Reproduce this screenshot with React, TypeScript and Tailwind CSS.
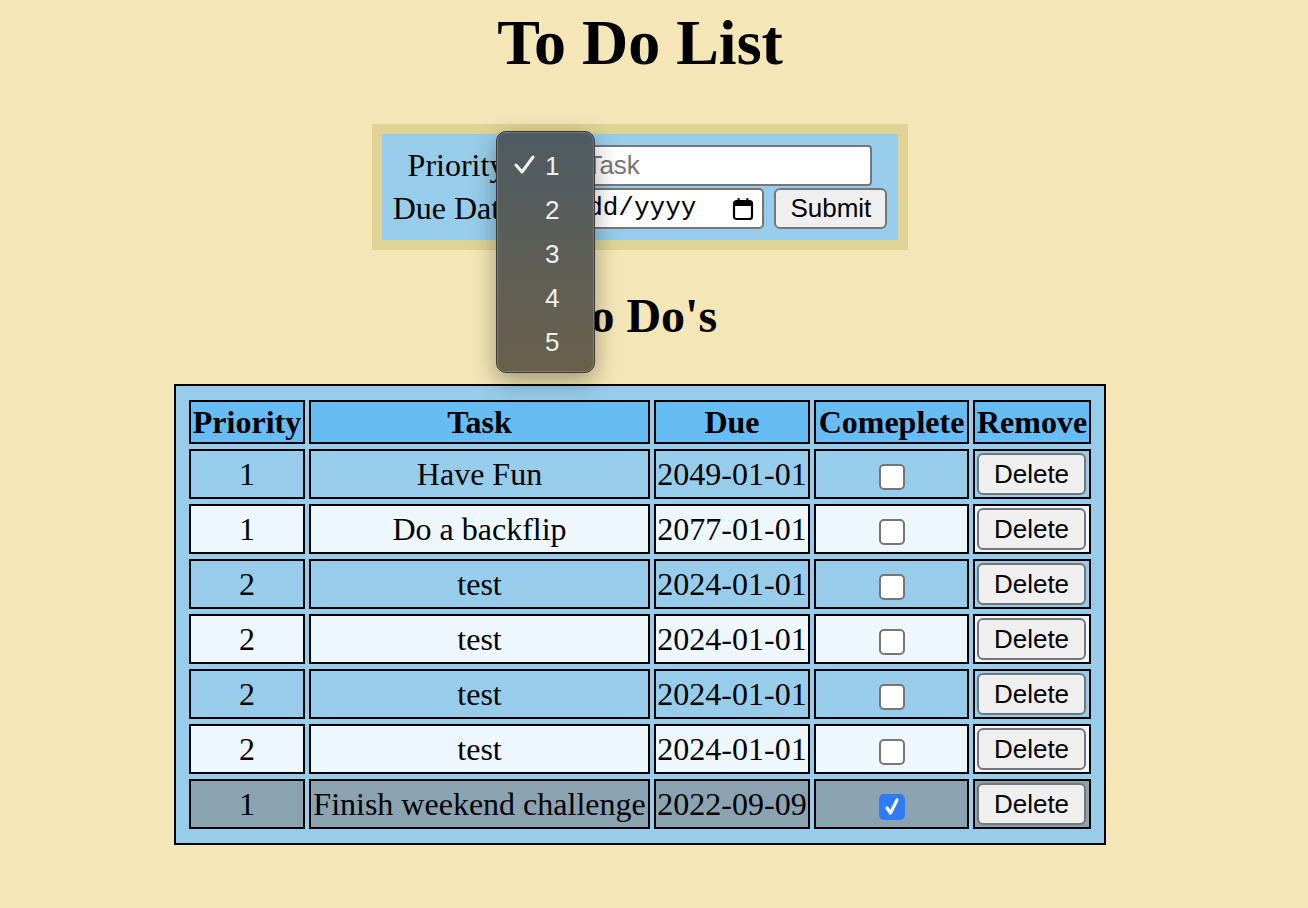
import React from "react";

const rows = [
  { p: "1", t: "Have Fun", d: "2049-01-01", done: false, bg: "bg-[#97cdea]" },
  { p: "1", t: "Do a backflip", d: "2077-01-01", done: false, bg: "bg-[#eff7fe]" },
  { p: "2", t: "test", d: "2024-01-01", done: false, bg: "bg-[#97cdea]" },
  { p: "2", t: "test", d: "2024-01-01", done: false, bg: "bg-[#eff7fe]" },
  { p: "2", t: "test", d: "2024-01-01", done: false, bg: "bg-[#97cdea]" },
  { p: "2", t: "test", d: "2024-01-01", done: false, bg: "bg-[#eff7fe]" },
  { p: "1", t: "Finish weekend challenge", d: "2022-09-09", done: true, bg: "bg-[#8ba3b0]" },
];

function Checkbox({ checked }: { checked: boolean }) {
  if (checked) {
    return (
      <span className="inline-flex h-[26px] w-[26px] items-center justify-center rounded-[5px] bg-[#2f7bf6] align-middle">
        <svg width="18" height="20" viewBox="0 0 18 20">
          <path d="M4 11 L7.5 16 L14 3" fill="none" stroke="white" strokeWidth="3.2" strokeLinecap="round" strokeLinejoin="round" />
        </svg>
      </span>
    );
  }
  return <span className="inline-block h-[26px] w-[26px] rounded-[5px] border-2 border-[#767676] bg-white align-middle" />;
}

export default function App() {
  return (
    <div className="relative min-h-[908px] bg-[#f4e6b6] font-['Liberation_Serif','Times_New_Roman',serif] text-black">
      <div className="flex w-[1280px] flex-col items-center">
        <h1 className="mt-[7px] text-[64px] font-bold leading-[71px]">To Do List</h1>

        <div className="mt-[46px] w-[536px] border-[10px] border-[#dfd495] bg-[#97cdea] pt-[11px] pb-[11px] text-[32px]">
          <div className="flex h-[41px] items-center justify-center gap-[8px]">
            <span className="leading-[37px]">Priority</span>
            <span className="inline-block h-[36px] w-[54px] rounded-[5px] border border-[#767676] bg-[#efefef]" />
            <div className="flex h-[41px] w-[297px] items-center rounded-[4px] border-2 border-[#767676] bg-white pl-[9px] font-['Liberation_Sans',Arial,sans-serif] text-[26px] text-[#757575]">
              Task
            </div>
          </div>
          <div className="mt-[2px] flex h-[41px] items-center justify-center gap-[8px]">
            <span className="leading-[37px]">Due Date</span>
            <div className="flex h-[41px] w-[242px] items-center justify-end overflow-hidden rounded-[5px] border-2 border-[#767676] bg-white pr-[8px] font-['Liberation_Mono','Courier_New',monospace] text-[26px]">
              <span className="whitespace-nowrap">mm/dd/yyyy</span>
              <svg className="ml-[36px] shrink-0" width="22" height="24" viewBox="0 0 22 24">
                <rect x="2" y="4" width="18" height="18" rx="2.5" fill="none" stroke="black" strokeWidth="2.2" />
                <rect x="2" y="4" width="18" height="5" fill="black" />
                <rect x="5.5" y="1" width="2.2" height="5" rx="1" fill="black" />
                <rect x="14.3" y="1" width="2.2" height="5" rx="1" fill="black" />
              </svg>
            </div>
            <button className="ml-[2px] flex h-[41px] w-[113px] items-center justify-center rounded-[6px] border-2 border-[#767676] bg-[#efefef] font-['Liberation_Sans',Arial,sans-serif] text-[26px]">
              Submit
            </button>
          </div>
        </div>

        <h2 className="mt-[39px] text-[48px] font-bold leading-[53px]">To Do's</h2>

        <table className="mt-[42px] border-separate border-spacing-x-[4px] border-spacing-y-[5px] border-2 border-black bg-[#97cdea] px-[9px] py-[9px] text-[32px]">
          <thead>
            <tr>
              {[
                ["Priority", "w-[116px]"],
                ["Task", "w-[341px]"],
                ["Due", "w-[156px]"],
                ["Comeplete", "w-[155px]"],
                ["Remove", "w-[118px]"],
              ].map(([h, w]) => (
                <th key={h} className={`${w} h-[44px] whitespace-nowrap border-2 border-black bg-[#67bcf4] p-0 text-center font-bold leading-[37px]`}>
                  {h}
                </th>
              ))}
            </tr>
          </thead>
          <tbody>
            {rows.map((r, i) => (
              <tr key={i}>
                <td className={`h-[50px] border-2 border-black ${r.bg} p-0 text-center leading-[37px]`}>{r.p}</td>
                <td className={`h-[50px] whitespace-nowrap border-2 border-black ${r.bg} p-0 text-center leading-[37px]`}>{r.t}</td>
                <td className={`h-[50px] whitespace-nowrap border-2 border-black ${r.bg} p-0 text-center leading-[37px]`}>{r.d}</td>
                <td className={`h-[50px] border-2 border-black ${r.bg} p-0 text-center leading-[37px]`}>
                  <Checkbox checked={r.done} />
                </td>
                <td className={`h-[50px] border-2 border-black ${r.bg} p-0 pl-[2px] text-left`}>
                  <button className="flex h-[42px] w-[109px] items-center justify-center rounded-[6px] border-2 border-[#767676] bg-[#efefef] font-['Liberation_Sans',Arial,sans-serif] text-[26px] leading-none">
                    Delete
                  </button>
                </td>
              </tr>
            ))}
          </tbody>
        </table>
      </div>

      <div className="absolute left-[496px] top-[131px] h-[242px] w-[99px] rounded-[10px] border border-[#3a3a3a] bg-gradient-to-b from-[#4e5b63] to-[#6a604b] pt-[12px] font-['Liberation_Sans',Arial,sans-serif] text-[26px] text-[#f0f0f0] shadow-[0_8px_24px_rgba(0,0,0,0.35),inset_0_0_0_1px_rgba(255,255,255,0.18)]">
        {["1", "2", "3", "4", "5"].map((n, i) => (
          <div key={n} className="relative flex h-[44px] items-center pl-[48px] leading-none">
            {i === 0 && (
              <svg className="absolute left-[16px] top-[11px]" width="22" height="20" viewBox="0 0 22 20">
                <path d="M3 10 L9 17 L20 2" fill="none" stroke="#f0f0f0" strokeWidth="3" strokeLinecap="round" strokeLinejoin="round" />
              </svg>
            )}
            {n}
          </div>
        ))}
      </div>
    </div>
  );
}
